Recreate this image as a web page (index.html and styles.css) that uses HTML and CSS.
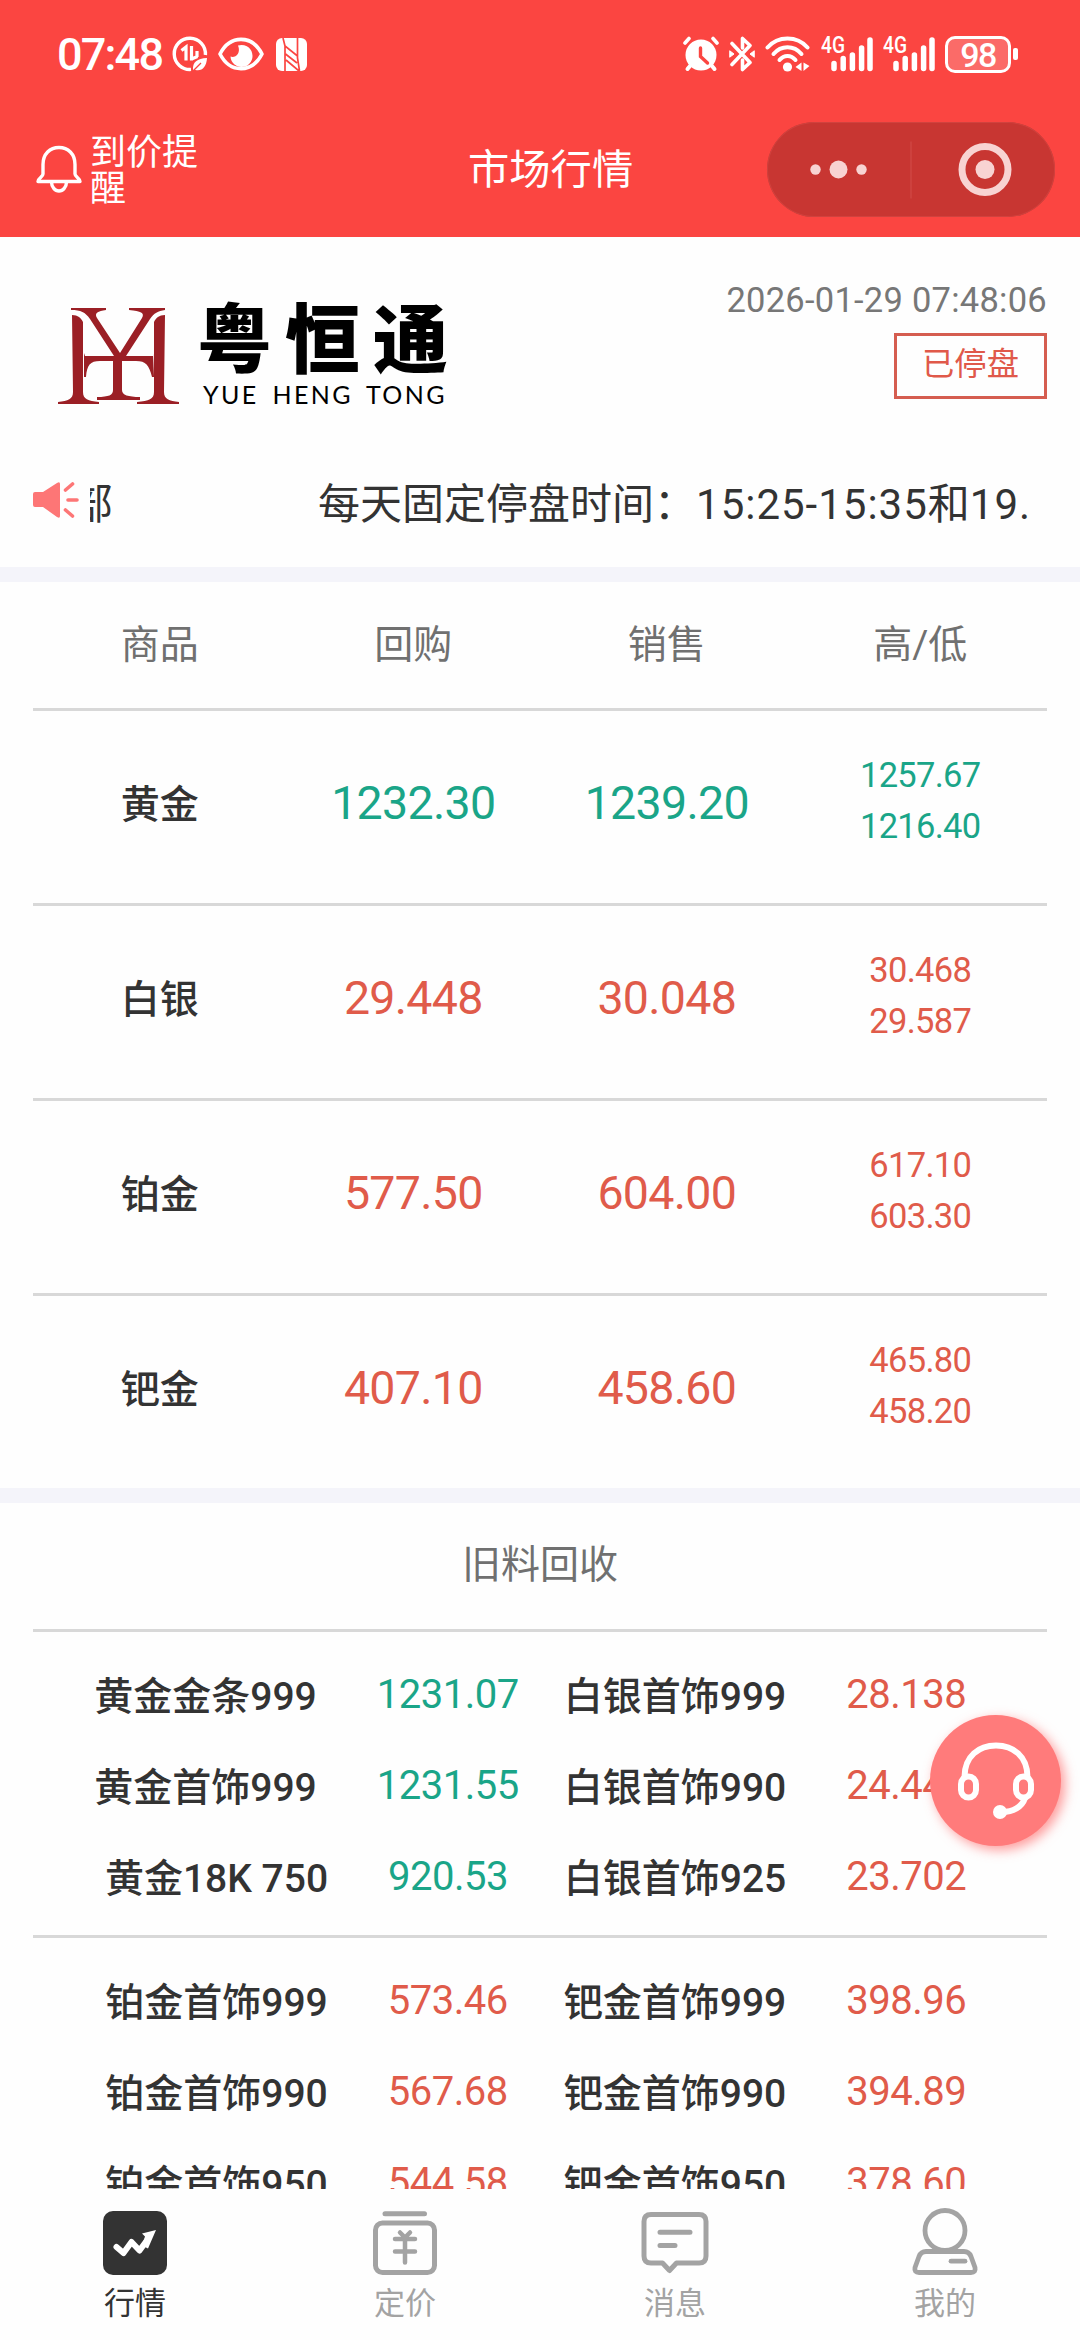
FILE: index.html
```
<!DOCTYPE html>
<html lang="zh-CN">
<head>
  <meta charset="UTF-8" />
  <meta name="viewport" content="width=device-width, initial-scale=1" />
  <title>市场行情</title>
  <link rel="stylesheet" href="styles.css">
</head>
<body>

  <header class="header">
    <div class="status-bar">
      <span class="clock">07:48</span>
      <svg class="icon-data" width="36" height="36" viewBox="0 0 36 36" fill="none" stroke="#fff" stroke-width="3.4">
        <path d="M19 33.4A15.6 15.6 0 1 1 33.4 19"/>
        <path d="M9.500 14.500l4.500-3.500v13.500M19.500 10v14.500M19.500 23l6-2.500M25 15v6" stroke-width="3.200"/>
        <path d="M21 34c-.5-8 4-11.500 14-12C34.500 31 30 35.500 23.500 34z" fill="#fff" stroke="none"/>
        <path d="M21 35l8-8" stroke="#fb4541" stroke-width="1.300"/>
      </svg>
      <svg class="icon-eye" width="46" height="34" viewBox="0 0 46 34">
        <path d="M2 17C12-2.500 34-2.500 44 17C34 36.500 12 36.500 2 17z" fill="none" stroke="#fff" stroke-width="3.600" stroke-linejoin="round"/>
        <path d="M20 8.500a11 11 0 1 1-7.500 11c4 2 11-2.500 7.500-11z" fill="#fff"/>
      </svg>
      <svg class="icon-nfc" width="31" height="33" viewBox="0 0 31 33">
        <path d="M6 0h19a6 6 0 0 1 6 6v21a6 6 0 0 1-6 6H6a6 6 0 0 1-6-6V6a6 6 0 0 1 6-6z" fill="#fff"/>
        <path d="M9 33V8M7 0l2 8 12.500 10M9.500 16L21 25M10 22l13 11M21.500 0v20l2 13" stroke="#fb4541" stroke-width="1.700" fill="none"/>
      </svg>

      <div class="status-right">
        <svg width="36" height="36" viewBox="0 0 36 36" fill="none" stroke="#fff" stroke-linecap="round">
          <circle cx="18" cy="19" r="15.500" fill="#fff" stroke="none"/>
          <path d="M2 7l4-4.500M34 7l-4-4.500" stroke-width="3.600"/>
          <path d="M7 30l-2.500 3M29 30l2.500 3" stroke-width="4"/>
          <path d="M17.500 12v8.500l7 6.500" stroke="#fb4541" stroke-width="3.400"/>
        </svg>
        <svg width="26" height="36" viewBox="0 0 26 36" fill="none" stroke="#fff" stroke-width="3.600" stroke-linecap="round" stroke-linejoin="round">
          <path d="M3 7.500L21 26.500L13.500 33.500V24M3 28.500L21 9.500L13.500 2.500V12"/>
          <path d="M1 15l4 3-4 3zM25 15l-4 3 4 3z" fill="#fff" stroke-width="1"/>
        </svg>
        <svg class="icon-wifi" width="46" height="36" viewBox="0 0 46 36" fill="none" stroke="#fff" stroke-width="4" stroke-linecap="round">
          <path d="M2.500 11.500C13-.5 32-.5 42.500 11.500"/>
          <path d="M8.500 18C16 9 29 9 36.500 18"/>
          <path d="M14.500 24C19 18.500 26 18.500 30.500 24"/>
          <circle cx="22.500" cy="31" r="4.600" fill="#fff" stroke="none"/>
          <path d="M36.500 26.500v8.500l-6-4zM38.500 26.500v8.500l6-5z" fill="#fff" stroke="none"/>
        </svg>
        <div class="signal">
          <span>4G</span>
          <svg width="42" height="36" viewBox="0 0 42 36" stroke="#fff" stroke-width="5.500" stroke-linecap="round">
            <path d="M3 32.500v-5M12.200 32.500v-10M21.400 32.500V19M30.600 32.500V12M39 32.500V4"/>
          </svg>
        </div>
        <div class="signal">
          <span>4G</span>
          <svg width="42" height="36" viewBox="0 0 42 36" stroke="#fff" stroke-width="5.500" stroke-linecap="round">
            <path d="M3 32.500v-5M12.200 32.500v-10M21.400 32.500V19M30.600 32.500V12M39 32.500V4"/>
          </svg>
        </div>
        <div class="battery">98</div>
        <div class="battery-tip"></div>
      </div>
    </div>

    <div class="nav">
      <div class="nav-alert">
        <svg width="46" height="48" viewBox="0 0 46 48" fill="none" stroke="#fff" stroke-width="3.400" stroke-linejoin="round">
          <path d="M7 29V19.500C7 9 14 2.500 23 2.500S39 9 39 19.500V29c0 3 5 4 5 7.500H2C2 33 7 32 7 29z"/>
          <path d="M15.500 37c0 5 3.500 9 7.500 9s7.500-4 7.500-9"/>
        </svg>
        <span>到价提醒</span>
      </div>
      <h1>市场行情</h1>
      <div class="capsule">
        <svg width="288" height="95" viewBox="0 0 288 95" fill="#f8d3d2">
          <circle cx="48.500" cy="47.500" r="5.200"/>
          <circle cx="71.500" cy="47.500" r="9"/>
          <circle cx="94.500" cy="47.500" r="5.200"/>
          <path d="M144 19.500v57" stroke="#d14a46" stroke-width="1.200"/>
          <circle cx="218" cy="47.500" r="23" fill="none" stroke="#f8d3d2" stroke-width="7"/>
          <circle cx="218" cy="47.500" r="9.500"/>
        </svg>
      </div>
    </div>
  </header>

  <main class="content">
    <section class="brand">
      <svg class="brand-mark" width="122" height="98" viewBox="0 0 122 98" fill="#9b1f25">
        <path d="M13 1h35v2c-8 1-12 3-9 8l23 35L84 11c3-5-1-7-13-8V1h36v2c-7 1-11 3-15 9L68 49h27V46l1 24h-2c-3-12-6-16-16-16H64v29c0 5 6 7 18 7v3H39v-3c12 0 16-2 16-7V54H42c-10 0-13 4-14 16h-2V46l1 3h29L32 12C27 5 23 3 13 3z"/>
        <path d="M14 8c6 0 9 3 11 7v70c0 7 5 9 16 10v2H0v-2c10-1 15-3 15-10z"/>
        <path d="M107 8c-6 0-9 3-11 7v70c0 7-5 9-17 10v2h42v-2c-10-1-15-3-15-10z"/>
      </svg>
      <div class="brand-name">
        <strong>粤恒通</strong>
        <span>YUE HENG TONG</span>
      </div>
      <div class="brand-info">
        <time>2026-01-29 07:48:06</time>
        <div class="badge">已停盘</div>
      </div>
    </section>

    <section class="notice">
      <svg width="46" height="36" viewBox="0 0 46 36">
        <path d="M0 12q0-2 2-2h8L24 1q3-2 3 1v32q0 3-3 1L10 25H2q-2 0-2-2z" fill="#fd7676"/>
        <path d="M32.500 8l7-6M35 18h9M32.500 28l7 6" stroke="#fd7676" stroke-width="3.600" stroke-linecap="round"/>
      </svg>
      <div class="marquee">
        <span class="marquee-end">部</span>
        <span class="marquee-text">每天固定停盘时间：<i>15:25-15:35</i>和<i>19.</i></span>
      </div>
    </section>

    <section class="market">
      <div class="row row-head">
        <div>商品</div><div>回购</div><div>销售</div><div>高/低</div>
      </div>
      <div class="row down">
        <div class="name">黄金</div>
        <div class="price">1232.30</div>
        <div class="price">1239.20</div>
        <div class="range"><span>1257.67</span><span>1216.40</span></div>
      </div>
      <div class="row up">
        <div class="name">白银</div>
        <div class="price">29.448</div>
        <div class="price">30.048</div>
        <div class="range"><span>30.468</span><span>29.587</span></div>
      </div>
      <div class="row up">
        <div class="name">铂金</div>
        <div class="price">577.50</div>
        <div class="price">604.00</div>
        <div class="range"><span>617.10</span><span>603.30</span></div>
      </div>
      <div class="row up">
        <div class="name">钯金</div>
        <div class="price">407.10</div>
        <div class="price">458.60</div>
        <div class="range"><span>465.80</span><span>458.20</span></div>
      </div>
    </section>

    <section class="recycle">
      <h2>旧料回收</h2>
      <div class="group">
        <div class="item"><b>黄金金条999</b><span class="down">1231.07</span></div>
        <div class="item"><b>白银首饰999</b><span class="up">28.138</span></div>
        <div class="item"><b>黄金首饰999</b><span class="down">1231.55</span></div>
        <div class="item"><b>白银首饰990</b><span class="up">24.445</span></div>
        <div class="item"><b>黄金18K 750</b><span class="down">920.53</span></div>
        <div class="item"><b>白银首饰925</b><span class="up">23.702</span></div>
      </div>
      <div class="group">
        <div class="item"><b>铂金首饰999</b><span class="up">573.46</span></div>
        <div class="item"><b>钯金首饰999</b><span class="up">398.96</span></div>
        <div class="item"><b>铂金首饰990</b><span class="up">567.68</span></div>
        <div class="item"><b>钯金首饰990</b><span class="up">394.89</span></div>
        <div class="item"><b>铂金首饰950</b><span class="up">544.58</span></div>
        <div class="item"><b>钯金首饰950</b><span class="up">378.60</span></div>
      </div>
    </section>
  </main>

  <nav class="tabbar">
    <div class="tab active">
      <svg width="66" height="68" viewBox="0 0 66 68">
        <rect x="1" y="3" width="64" height="64" rx="10" fill="#333"/>
        <path d="M14.500 39l7 6 8-11 8 8.500L46 31" fill="none" stroke="#fff" stroke-width="6" stroke-linecap="round" stroke-linejoin="round"/>
        <path d="M54 22l-14 3.500 3 3-3 9 6 3z" fill="#fff"/>
      </svg>
      <span>行情</span>
    </div>
    <div class="tab">
      <svg width="66" height="68" viewBox="0 0 66 68" fill="none" stroke="#a3a3a3" stroke-width="5" stroke-linecap="round" stroke-linejoin="round">
        <path d="M13 5.800h39.500"/>
        <rect x="3.500" y="15" width="59" height="49.500" rx="7"/>
        <path d="M28 24.500l5 5 5-5M23 31h20M23 43.500h20M33 30v24.500" stroke-width="4.500"/>
      </svg>
      <span>定价</span>
    </div>
    <div class="tab">
      <svg width="68" height="68" viewBox="0 0 68 68" fill="none" stroke="#a3a3a3" stroke-width="5" stroke-linecap="round" stroke-linejoin="round">
        <path d="M10 6.500H58q7 0 7 7V48q0 7-7 7H35.500l-7 7.500-7-7.500H10q-7 0-7-7V13.500q0-7 7-7z"/>
        <path d="M19 24.300h30M19 37.500h15"/>
      </svg>
      <span>消息</span>
    </div>
    <div class="tab">
      <svg width="68" height="68" viewBox="0 0 68 68" fill="none" stroke="#a3a3a3" stroke-width="4.800" stroke-linecap="round" stroke-linejoin="round">
        <circle cx="34" cy="22.500" r="20"/>
        <path d="M15 43.500H53q5 0 7 5l4 11q1 5-4 5H8q-5 0-4-5l4-11q2-5 7-5z"/>
        <path d="M40 53.200h14"/>
      </svg>
      <span>我的</span>
    </div>
  </nav>

  <div class="service">
    <svg width="80" height="80" viewBox="0 0 80 80" fill="none" stroke="#fff" stroke-width="6" stroke-linecap="round">
      <path d="M8.500 36C8.500 15 23 4.500 40 4.500S71.500 15 71.500 36"/>
      <rect x="5" y="35.500" width="15" height="21" rx="7.500"/>
      <rect x="60" y="35.500" width="15" height="21" rx="7.500"/>
      <path d="M69 57c-3 9-12 14-23 14"/>
      <circle cx="44" cy="71" r="7" fill="#fff" stroke="none"/>
    </svg>
  </div>

</body>
</html>
```
FILE: styles.css
```
* {
  box-sizing: border-box;
}
body {
  margin: 0;
  width: 1080px;
  height: 2340px;
  overflow: hidden;
  display: flex;
  flex-direction: column;
  background: #fefefe;
  color: #333;
  font-family: Roboto, "Noto Sans CJK SC", sans-serif;
}
svg {
  display: block;
  flex: none;
}
h1, h2 {
  margin: 0;
  font-weight: 400;
}

/* header */
.header {
  flex: none;
  height: 237px;
  background: #fb4541;
  color: #fff;
}
.status-bar {
  height: 108px;
  padding: 0 62px 0 57px;
  display: flex;
  align-items: center;
}
.clock {
  width: 115px;
  font-size: 45px;
  font-weight: 500;
  letter-spacing: -1.8px;
}
.icon-eye {
  margin-left: 10px;
}
.icon-nfc {
  margin-left: 12px;
}
.status-right {
  margin-left: auto;
  display: flex;
  align-items: center;
  gap: 10px;
}
.signal {
  position: relative;
  width: 52px;
  display: flex;
  justify-content: flex-end;
}
.signal span {
  position: absolute;
  left: 0;
  top: -3px;
  font-size: 24px;
  line-height: 24px;
  font-weight: 500;
  transform: scaleX(0.8);
  transform-origin: 0 0;
}
.battery {
  width: 66px;
  height: 37px;
  border: 3px solid #fff;
  border-radius: 10px;
  background: #fb6b68;
  font-size: 34px;
  font-weight: 500;
  line-height: 32px;
  text-align: center;
  letter-spacing: -1.5px;
}
.battery-tip {
  width: 5px;
  height: 12px;
  margin-left: -8px;
  border-radius: 2px;
  background: #fff;
}
.nav {
  height: 122px;
  padding: 0 25px 0 36px;
  display: flex;
  align-items: center;
}
.nav-alert {
  width: 432px;
  display: flex;
  align-items: center;
  gap: 8px;
}
.nav-alert span {
  width: 110px;
  padding-top: 4px;
  font-size: 36px;
  line-height: 36px;
}
h1 {
  padding-top: 2px;
  font-size: 41.3px;
  line-height: 60px;
}
.capsule {
  width: 288px;
  height: 95px;
  margin-left: auto;
  border-radius: 48px;
  background: #c83632;
  box-shadow: inset 0 0 0 1px #d0423e;
}

/* brand */
.content {
  height: 1952px;
  overflow: hidden;
}
.brand {
  height: 216px;
  padding: 0 33px 0 58px;
  display: flex;
}
.brand-mark {
  margin-top: 70px;
}
.brand-name {
  margin: 64px 0 0 17px;
  color: #000;
}
.brand-name strong {
  display: block;
  font-size: 75px;
  font-weight: 900;
  line-height: 80px;
  letter-spacing: 13px;
}
.brand-name span {
  display: block;
  margin-left: 6px;
  font-family: Lato, sans-serif;
  font-size: 25px;
  line-height: 26px;
  letter-spacing: 2.4px;
  word-spacing: 5px;
}
.brand-info {
  margin-left: auto;
  display: flex;
  flex-direction: column;
  align-items: flex-end;
}
time {
  margin-top: 42px;
  font-size: 34.5px;
  line-height: 42px;
  letter-spacing: 0.25px;
  color: #777;
}
.badge {
  margin-top: 12px;
  width: 153px;
  height: 66px;
  border: 3px solid #d55d50;
  color: #e0594a;
  font-size: 32.3px;
  line-height: 57px;
  text-align: center;
}

/* scrolling notice */
.notice {
  height: 129px;
  padding: 0 33px;
  display: flex;
  border-bottom: 15px solid #f4f4fa;
}
.notice svg {
  margin-top: 29px;
}
.marquee {
  margin: 22px 0 0 11px;
  width: 957px;
  overflow: hidden;
  white-space: nowrap;
  font-size: 42px;
  line-height: 60px;
  display: flex;
}
.marquee-end {
  margin-left: -19px;
}
.marquee-text {
  margin-left: 205px;
}
.marquee i {
  font-style: normal;
  letter-spacing: 1px;
}

/* price table */
.market {
  padding: 0 33px;
  border-bottom: 15px solid #f4f4fa;
}
.row {
  height: 195px;
  padding-bottom: 12px;
  display: grid;
  grid-template-columns: repeat(4, 1fr);
  align-items: center;
  text-align: center;
  border-bottom: 3px solid #d8d8d8;
}
.row:last-child {
  height: 192px;
  border-bottom: none;
}
.row-head {
  height: 129px;
  padding-bottom: 9px;
  font-size: 39px;
  color: #707070;
}
.name {
  color: #333;
  font-size: 39px;
  font-weight: 500;
}
.price {
  padding-top: 4px;
  font-size: 46.5px;
  letter-spacing: -0.7px;
}
.range {
  display: flex;
  flex-direction: column;
  font-size: 34.5px;
  line-height: 51px;
  letter-spacing: -0.7px;
}
.down {
  color: #1aa588;
}
.up {
  color: #e05b4a;
}

/* recycle list */
.recycle {
  padding: 0 33px;
}
h2 {
  height: 129px;
  font-size: 39px;
  line-height: 124px;
  text-align: center;
  color: #707070;
  border-bottom: 3px solid #d8d8d8;
}
.group {
  padding: 15px 0;
  display: grid;
  grid-template-columns: 1fr 1fr;
  border-bottom: 3px solid #d8d8d8;
}
.item {
  height: 91px;
  padding-left: 40px;
  display: flex;
  align-items: center;
  justify-content: center;
  gap: 60px;
  font-size: 39px;
}
.item:nth-child(even) {
  padding: 0 57px 0 0;
}
.item b {
  font-weight: 500;
}
.item span {
  padding-top: 4px;
  font-size: 40px;
  letter-spacing: -0.5px;
}

/* bottom tabs */
.tabbar {
  height: 151px;
  padding-top: 19px;
  display: grid;
  grid-template-columns: repeat(4, 1fr);
}
.tab {
  display: flex;
  flex-direction: column;
  align-items: center;
  font-size: 31px;
  line-height: 46px;
  color: #a3a3a3;
}
.tab span {
  margin-top: 5px;
}
.tab.active {
  color: #333;
}

/* floating customer service button */
.service {
  position: fixed;
  left: 930px;
  top: 1715px;
  width: 131px;
  height: 131px;
  border-radius: 50%;
  background: #ff7b7b;
  box-shadow: 4px 4px 12px rgba(255, 90, 90, 0.6);
  display: flex;
  align-items: center;
  justify-content: center;
}
```
